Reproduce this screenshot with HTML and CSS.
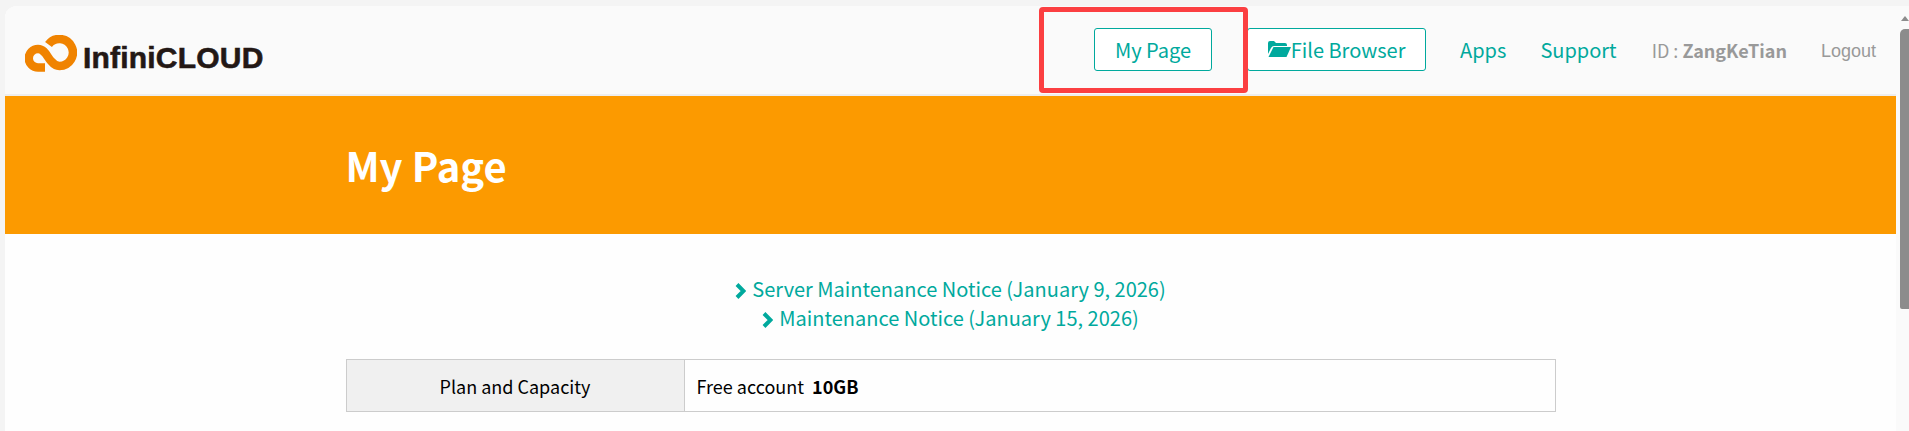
FILE: index.html
```html
<!DOCTYPE html>
<html lang="en">
<head>
    <meta charset="UTF-8">
    <meta name="viewport" content="width=device-width, initial-scale=1.0">
    <title>My Page</title>
    <link rel="stylesheet" href="styles.css">
</head>
<body>
    <div class="window">
        <div class="page">
            <header class="header">
                <a class="logo" href="#">
                    <svg class="logo-mark" viewBox="0 0 52 37" aria-hidden="true">
                        <path d="M20 32.500H13A9.250 9.250 0 0 1 13 14C20 14 22 22 26 26C28.500 29 31 31 34.500 31A13.500 13.500 0 1 0 23.500 9.500" fill="none" stroke="#f08300" stroke-width="8.500"/>
                    </svg>
                    <span class="logo-text">InfiniCLOUD</span>
                </a>
                <nav class="nav">
                    <a class="nav-btn btn-mypage" href="#">My Page</a>
                    <a class="nav-btn btn-files" href="#">
                        <svg class="folder" viewBox="0 0 23 16" aria-hidden="true">
                            <path d="M0 13V2Q0 0 2 0H6L8 2H17Q19 2 19 4V5H6Q4 5 3 7Z" fill="#00a99d"/>
                            <path d="M5.500 6H23L18.500 16H0.500Z" fill="#00a99d"/>
                        </svg>File Browser</a>
                    <a class="nav-link" href="#">Apps</a>
                    <a class="nav-link" href="#">Support</a>
                    <span class="user">ID : <b>ZangKeTian</b></span>
                    <a class="logout" href="#">Logout</a>
                </nav>
            </header>
            <section class="banner">
                <h1>My Page</h1>
            </section>
            <main class="content">
                <ul class="notices">
                    <li><a href="#"><svg class="chevron" viewBox="0 0 11 16" aria-hidden="true"><path d="M2 1.500L8.500 8L2 14.500" fill="none" stroke="#00a99d" stroke-width="4"/></svg>Server Maintenance Notice (January 9, 2026)</a></li>
                    <li><a href="#"><svg class="chevron" viewBox="0 0 11 16" aria-hidden="true"><path d="M2 1.500L8.500 8L2 14.500" fill="none" stroke="#00a99d" stroke-width="4"/></svg>Maintenance Notice (January 15, 2026)</a></li>
                </ul>
                <table class="plan">
                    <tr>
                        <th>Plan and Capacity</th>
                        <td>Free account&nbsp; <b>10GB</b></td>
                    </tr>
                </table>
            </main>
        </div>
        <div class="scrollbar">
            <span class="scroll-arrow"></span>
            <span class="scroll-thumb"></span>
        </div>
    </div>
    <div class="highlight"></div>
</body>
</html>
```

FILE: styles.css
```css
* {
    box-sizing: border-box;
}

html,
body {
    height: 100%;
}

body {
    margin: 0;
    padding: 6px 0 0 5px;
    overflow: hidden;
    background-color: #f4f4f4;
    font-family: "Noto Sans CJK JP", "Noto Sans", sans-serif;
    color: #000;
}

a {
    text-decoration: none;
    color: #00a99d;
}

.window {
    display: flex;
    height: 100%;
    border-top-left-radius: 12px;
    overflow: hidden;
    background-color: #fafafa;
}

.page {
    flex: 1;
    background-color: #fefefe;
}

.header {
    display: flex;
    align-items: center;
    justify-content: space-between;
    height: 90px;
    padding: 0 20px;
    background-color: #fafafa;
    border-bottom: 2px solid #eee;
}

.logo {
    display: flex;
    align-items: center;
    gap: 6px;
    margin-top: 7px;
}

.logo-mark {
    width: 52px;
    height: 37px;
}

.logo-text {
    font-family: "Liberation Sans", Arial, sans-serif;
    font-weight: bold;
    font-size: 30px;
    letter-spacing: 0.2px;
    line-height: 30px;
    margin-top: 8px;
    color: #231815;
    -webkit-text-stroke: 0.6px #231815;
}

.nav {
    display: flex;
    align-items: center;
    margin-bottom: 2px;
    font-size: 20px;
}

.nav-btn {
    display: flex;
    align-items: center;
    justify-content: center;
    height: 43px;
    background-color: #fff;
    border: 1px solid #00a99d;
    border-radius: 3px;
}

.btn-mypage {
    width: 118px;
    margin-right: 35px;
}

.btn-files {
    width: 179px;
}

.folder {
    width: 23px;
    height: 16px;
}

.nav-link {
    margin-left: 34px;
}

.user {
    margin-left: 35px;
    margin-top: 2px;
    font-size: 18px;
    color: #999;
}

.logout {
    margin-left: 34px;
    margin-top: 5px;
    font-family: "Liberation Sans", Arial, sans-serif;
    font-size: 18px;
    color: #999;
}

.banner {
    height: 138px;
    background-color: #fc9a00;
}

.banner h1 {
    width: 1210px;
    margin: 0 auto;
    font-size: 40px;
    font-weight: bold;
    line-height: 138px;
    color: #fff;
}

.content {
    width: 1210px;
    margin: 0 auto;
    padding-top: 40px;
}

.notices {
    list-style: none;
    margin: 0 0 27px;
    padding: 0;
    font-size: 20px;
    line-height: 29px;
    text-align: center;
}

.chevron {
    width: 11px;
    height: 16px;
    margin-right: 6px;
    vertical-align: -2px;
}

.plan {
    width: 100%;
    border-collapse: collapse;
    font-size: 18px;
}

.plan th,
.plan td {
    height: 52px;
    border: 1px solid #ccc;
}

.plan th {
    width: 338px;
    font-weight: normal;
    background-color: #f0f0f0;
}

.plan td {
    padding-left: 12px;
}

.scrollbar {
    display: flex;
    flex-direction: column;
    align-items: flex-end;
    width: 13px;
    background-color: #fafafa;
}

.scroll-arrow {
    width: 0;
    height: 0;
    margin: 10px 0 8px;
    border-left: 4px solid transparent;
    border-right: 4px solid transparent;
    border-bottom: 5px solid #8c8c8c;
}

.scroll-thumb {
    width: 9px;
    height: 280px;
    border-radius: 5px 0 0 2px;
    background-color: #8c8c8c;
}

.highlight {
    position: absolute;
    left: 1039px;
    top: 7px;
    width: 209px;
    height: 86px;
    border: 5px solid #fb3f41;
    border-radius: 4px;
}
```
